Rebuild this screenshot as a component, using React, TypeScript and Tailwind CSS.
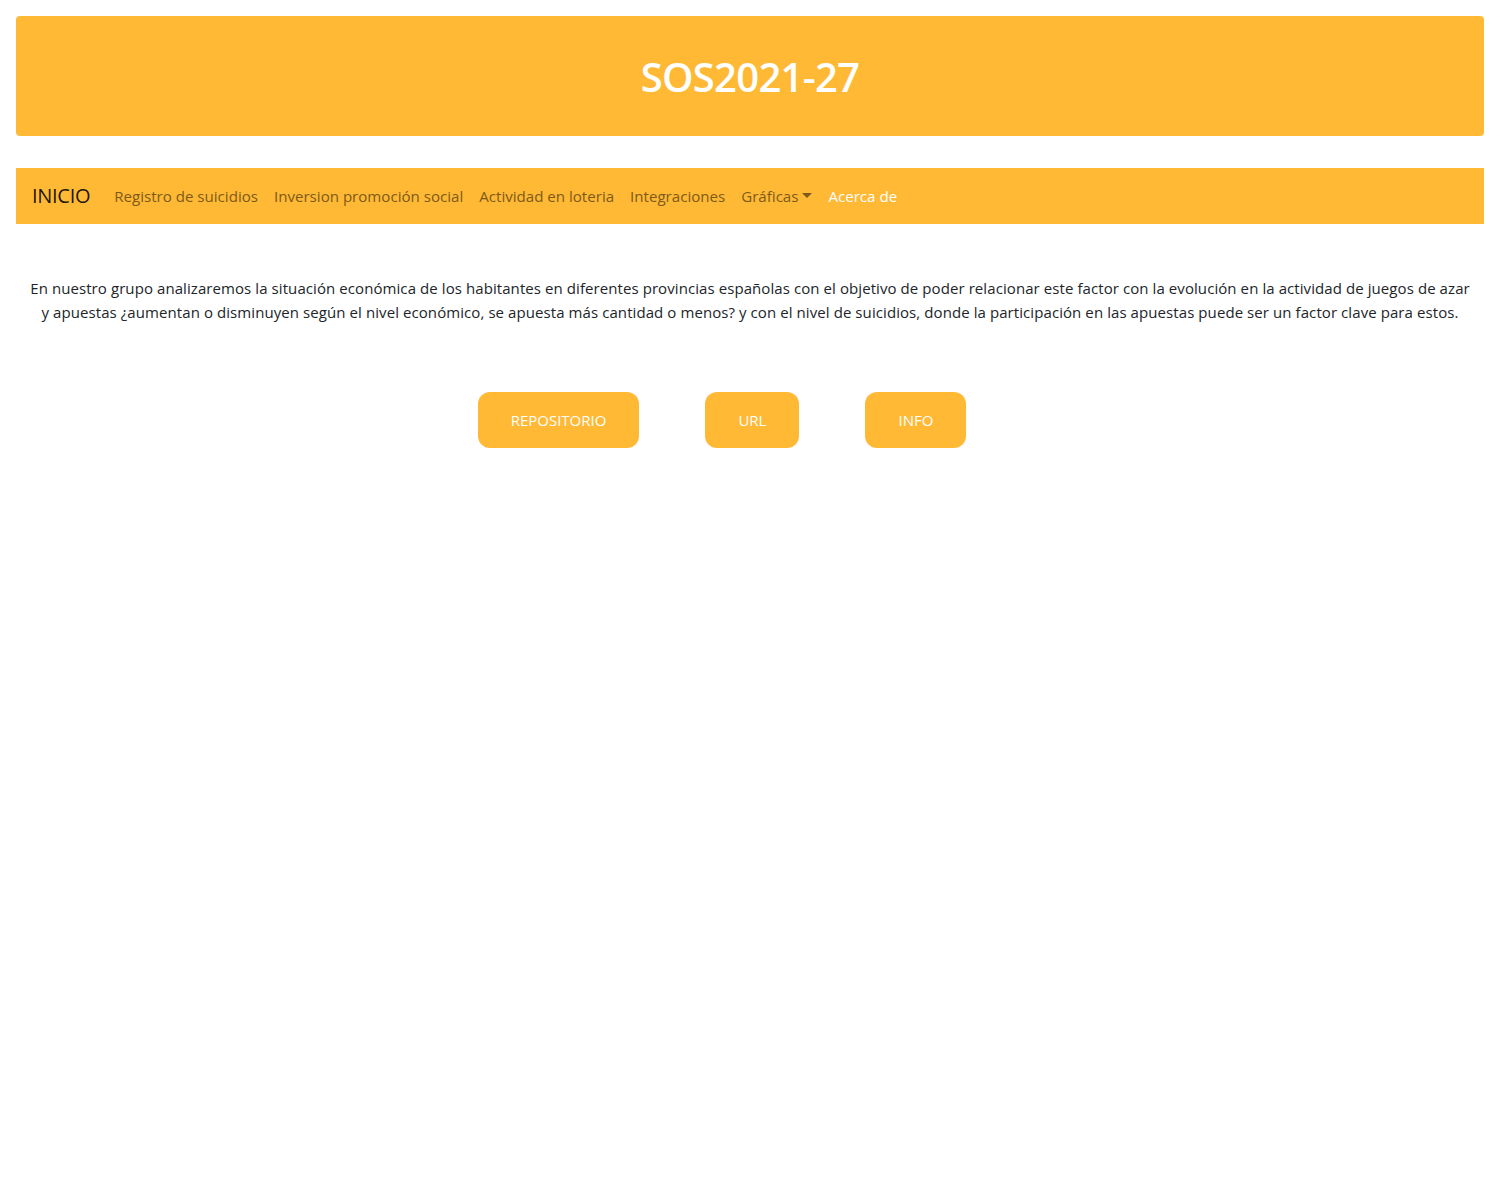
import React from "react";

export default function App() {
  const links = [
    "Registro de suicidios",
    "Inversion promoción social",
    "Actividad en loteria",
    "Integraciones",
  ];
  return (
    <div
      className="min-h-[1200px] bg-white text-[#212529]"
      style={{ fontFamily: '"Open Sans", "Noto Sans", sans-serif' }}
    >
      <div className="px-4 pt-4">
        <header className="flex h-[120px] items-center justify-center rounded bg-[#ffb935]">
          <h1 className="pt-[2px] text-[40px] font-semibold leading-tight tracking-[-0.7px] text-white">
            SOS2021-27
          </h1>
        </header>
      </div>

      <div className="mt-8 px-4">
        <nav className="flex h-14 items-center bg-[#ffb935] px-4">
          <span className="mr-4 text-[20px] tracking-[-0.3px] text-black/90">INICIO</span>
          <div className="flex items-center text-[15.1px]">
            {links.map((l) => (
              <span key={l} className="px-2 text-[#7d5a1a]">
                {l}
              </span>
            ))}
            <span className="flex items-center px-2 text-[#7d5a1a]">
              Gráficas
              <span className="ml-1 inline-block h-0 w-0 border-x-[5px] border-t-[5px] border-x-transparent border-t-[#7d5a1a]" />
            </span>
            <span className="px-2 text-white">Acerca de</span>
          </div>
        </nav>
      </div>

      <p className="mx-auto mt-[52px] px-[30px] text-center text-[15px] leading-6 tracking-[0.08px]">
        En nuestro grupo analizaremos la situación económica de los habitantes en diferentes provincias españolas con el objetivo de poder relacionar este factor con la evolución en la actividad de juegos de azar y apuestas ¿aumentan o disminuyen según el nivel económico, se apuesta más cantidad o menos? y con el nivel de suicidios, donde la participación en las apuestas puede ser un factor clave para estos.
      </p>

      <div className="mt-[68px] flex justify-center gap-[66px] pr-[56px]">
        {["REPOSITORIO", "URL", "INFO"].map((b) => (
          <button
            key={b}
            className="h-14 rounded-xl bg-[#ffb935] px-[33px] text-[15px] text-white"
          >
            {b}
          </button>
        ))}
      </div>
    </div>
  );
}
